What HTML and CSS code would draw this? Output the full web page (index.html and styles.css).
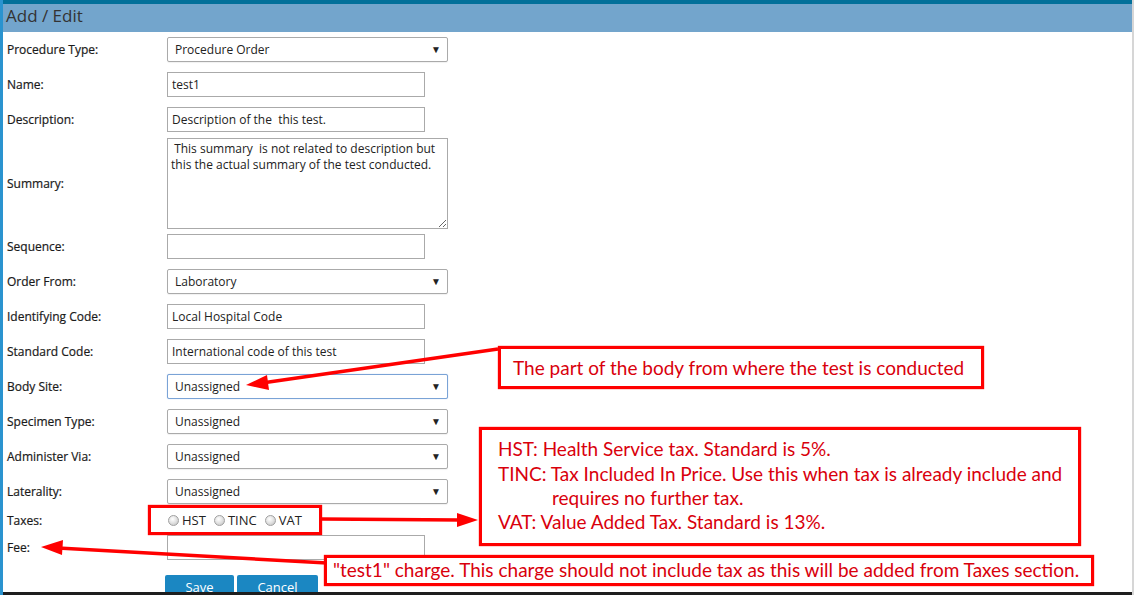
FILE: index.html
```html
<!DOCTYPE html>
<html>
<head>
<meta charset="utf-8">
<link rel="stylesheet" href="styles.css">
</head>
<body>
<div class="page">
  <div class="topbar"></div>
  <div class="header">Add / Edit</div>
  <form class="form">
    <div class="row"><label>Procedure Type:</label><span class="sel"><select><option>Procedure Order</option></select></span></div>
    <div class="row"><label>Name:</label><input type="text" value="test1"></div>
    <div class="row"><label>Description:</label><input type="text" value="Description of the  this test."></div>
    <div class="row row-summary"><label>Summary:</label><textarea> This summary  is not related to description but this the actual summary of the test conducted.</textarea></div>
    <div class="row"><label>Sequence:</label><input type="text" value=""></div>
    <div class="row"><label>Order From:</label><span class="sel"><select><option>Laboratory</option></select></span></div>
    <div class="row"><label>Identifying Code:</label><input type="text" value="Local Hospital Code"></div>
    <div class="row"><label>Standard Code:</label><input type="text" value="International code of this test"></div>
    <div class="row"><label>Body Site:</label><span class="sel focus"><select><option>Unassigned</option></select></span></div>
    <div class="row"><label>Specimen Type:</label><span class="sel"><select><option>Unassigned</option></select></span></div>
    <div class="row"><label>Administer Via:</label><span class="sel"><select><option>Unassigned</option></select></span></div>
    <div class="row row-last-sel"><label>Laterality:</label><span class="sel"><select><option>Unassigned</option></select></span></div>
    <div class="row row-taxes"><label>Taxes:</label>
      <span class="radios">
        <span class="radio"><input type="radio" name="tax"> HST</span>
        <span class="radio"><input type="radio" name="tax"> TINC</span>
        <span class="radio"><input type="radio" name="tax"> VAT</span>
      </span>
    </div>
    <div class="row row-fee"><label>Fee:</label><input type="text" value=""></div>
    <div class="buttons"><button type="button" class="btn save">Save</button><button type="button" class="btn cancel">Cancel</button></div>
  </form>

  <svg class="arrows" width="1134" height="595" viewBox="0 0 1134 595">
    <g stroke="#f00" stroke-width="3.5" fill="none">
      <line x1="498" y1="349" x2="262" y2="383"/>
      <line x1="321" y1="519" x2="460" y2="520"/>
      <line x1="327" y1="563" x2="58" y2="548"/>
    </g>
    <g fill="#f00">
      <polygon points="246,385 267,375 269,390"/>
      <polygon points="478,520 457,513 457,527"/>
      <polygon points="41,547 63,540 62,555"/>
    </g>
  </svg>

  <div class="note note-body">The part of the body from where the test is conducted</div>
  <div class="note note-taxbox"></div>
  <div class="note note-tax">
    <div>HST: Health Service tax. Standard is 5%.</div>
    <div>TINC: Tax Included In Price. Use this when tax is already include and</div>
    <div class="indent">requires no further tax.</div>
    <div>VAT: Value Added Tax. Standard is 13%.</div>
  </div>
  <div class="note note-fee">"test1" charge. This charge should not include tax as this will be added from Taxes section.</div>
  <div class="bottombar"></div>
</div>
</body>
</html>
```

FILE: styles.css
```css
html, body {
  margin: 0;
  padding: 0;
  background: #fff;
}
body {
  width: 1134px;
  height: 595px;
  overflow: hidden;
  font-family: "Open Sans", "Noto Sans", sans-serif;
  color: #333;
}
.page {
  position: relative;
  width: 1129px;
  height: 595px;
  border-left: 3px solid #2a93cf;
  border-right: 2px solid #d6d6d6;
  box-sizing: content-box;
  overflow: hidden;
}
.topbar {
  height: 4px;
  background: #02709a;
}
.header {
  height: 28px;
  background: #73a5cc;
  font-size: 17px;
  line-height: 24px;
  padding-left: 3px;
  color: #333;
}
.form {
  padding: 5px 0 0 4px;
  margin: 0;
}
.row {
  display: flex;
  align-items: center;
  height: 25px;
  margin-bottom: 10px;
}
.row label {
  width: 160px;
  font-size: 12px;
  color: #1a1a1a;
  -webkit-text-stroke: 0.2px #1a1a1a;
}
.row input[type="text"] {
  width: 258px;
  height: 25px;
  box-sizing: border-box;
  border: 1px solid #aaa;
  padding: 0 4px;
  font-family: inherit;
  font-size: 12px;
  color: #222;
  margin: 0;
}
.sel {
  position: relative;
  display: inline-block;
  width: 281px;
  height: 25px;
}
.sel select {
  appearance: none;
  -webkit-appearance: none;
  width: 281px;
  height: 25px;
  box-sizing: border-box;
  border: 1px solid #aaa;
  border-radius: 2px;
  background: #fff;
  padding: 0 7px;
  font-family: inherit;
  font-size: 12px;
  color: #222;
  margin: 0;
  box-shadow: 0 1px 1px rgba(0,0,0,0.06);
}
.sel::after {
  content: "\25BC";
  position: absolute;
  right: 7px;
  top: 5px;
  font-size: 10px;
  color: #222;
  pointer-events: none;
}
.sel.focus select {
  border-color: #7aa3d6;
  box-shadow: 0 0 1px #9bbbe6;
}
.row-summary {
  height: 91px;
  margin-top: -4px;
  margin-bottom: 5px;
}
.row-summary textarea {
  width: 281px;
  height: 91px;
  box-sizing: border-box;
  border: 1px solid #aaa;
  padding: 2px 3px;
  font-family: inherit;
  font-size: 12px;
  line-height: 16px;
  color: #222;
  margin: 0;
}
.row-last-sel {
  margin-bottom: 6px;
}
.row-taxes {
  height: 20px;
  margin-bottom: 5px;
}
.radios {
  display: flex;
  align-items: center;
  font-size: 13px;
  color: #222;
  padding-left: 1px;
}
.radio {
  display: inline-flex;
  align-items: center;
  margin-right: 8px;
}
.radio input {
  appearance: none;
  -webkit-appearance: none;
  width: 11px;
  height: 11px;
  border-radius: 50%;
  border: 1px solid #a0a0a0;
  background: radial-gradient(circle at 40% 35%, #fff 0%, #e4e4e4 45%, #bdbdbd 100%);
  margin: 0 3px 0 0;
  box-sizing: border-box;
}
.buttons {
  display: flex;
  gap: 3px;
  padding-left: 158px;
  margin-top: 15px;
}
.btn {
  height: 20px;
  box-sizing: border-box;
  border: none;
  background: #1b87c2;
  color: #fff;
  font-family: inherit;
  font-size: 13px;
  padding: 4px 0 0;
  line-height: 16px;
  border-radius: 2px 2px 0 0;
}
.save { width: 69px; }
.cancel { width: 81px; }

.arrows {
  position: absolute;
  left: -3px;
  top: 0;
  pointer-events: none;
}
.note {
  position: absolute;
  box-sizing: border-box;
  border: 3px solid #f00;
  color: #d9000c;
  font-family: "Lato", "Open Sans", sans-serif;
  font-size: 19px;
  background: #fff;
  box-shadow: 0 0 1px #f00;
  white-space: nowrap;
}
.note-body {
  left: 495px;
  top: 346px;
  width: 486px;
  height: 43px;
  padding: 7px 0 0 12px;
  line-height: 24px;
}
.note-taxbox {
  left: 145px;
  top: 505px;
  width: 174px;
  height: 30px;
  background: transparent;
}
.note-tax {
  left: 476px;
  top: 427px;
  width: 602px;
  height: 119px;
  padding: 6px 0 0 16px;
  line-height: 25px;
}
.note-tax .indent {
  padding-left: 54px;
  line-height: 23px;
}
.note-fee {
  left: 321px;
  top: 555px;
  width: 770px;
  height: 31px;
  padding: 0 0 0 6px;
  line-height: 24px;
}
.bottombar {
  position: absolute;
  left: -3px;
  right: 0;
  bottom: 0;
  height: 3px;
  background: #1e1e1e;
}
```
